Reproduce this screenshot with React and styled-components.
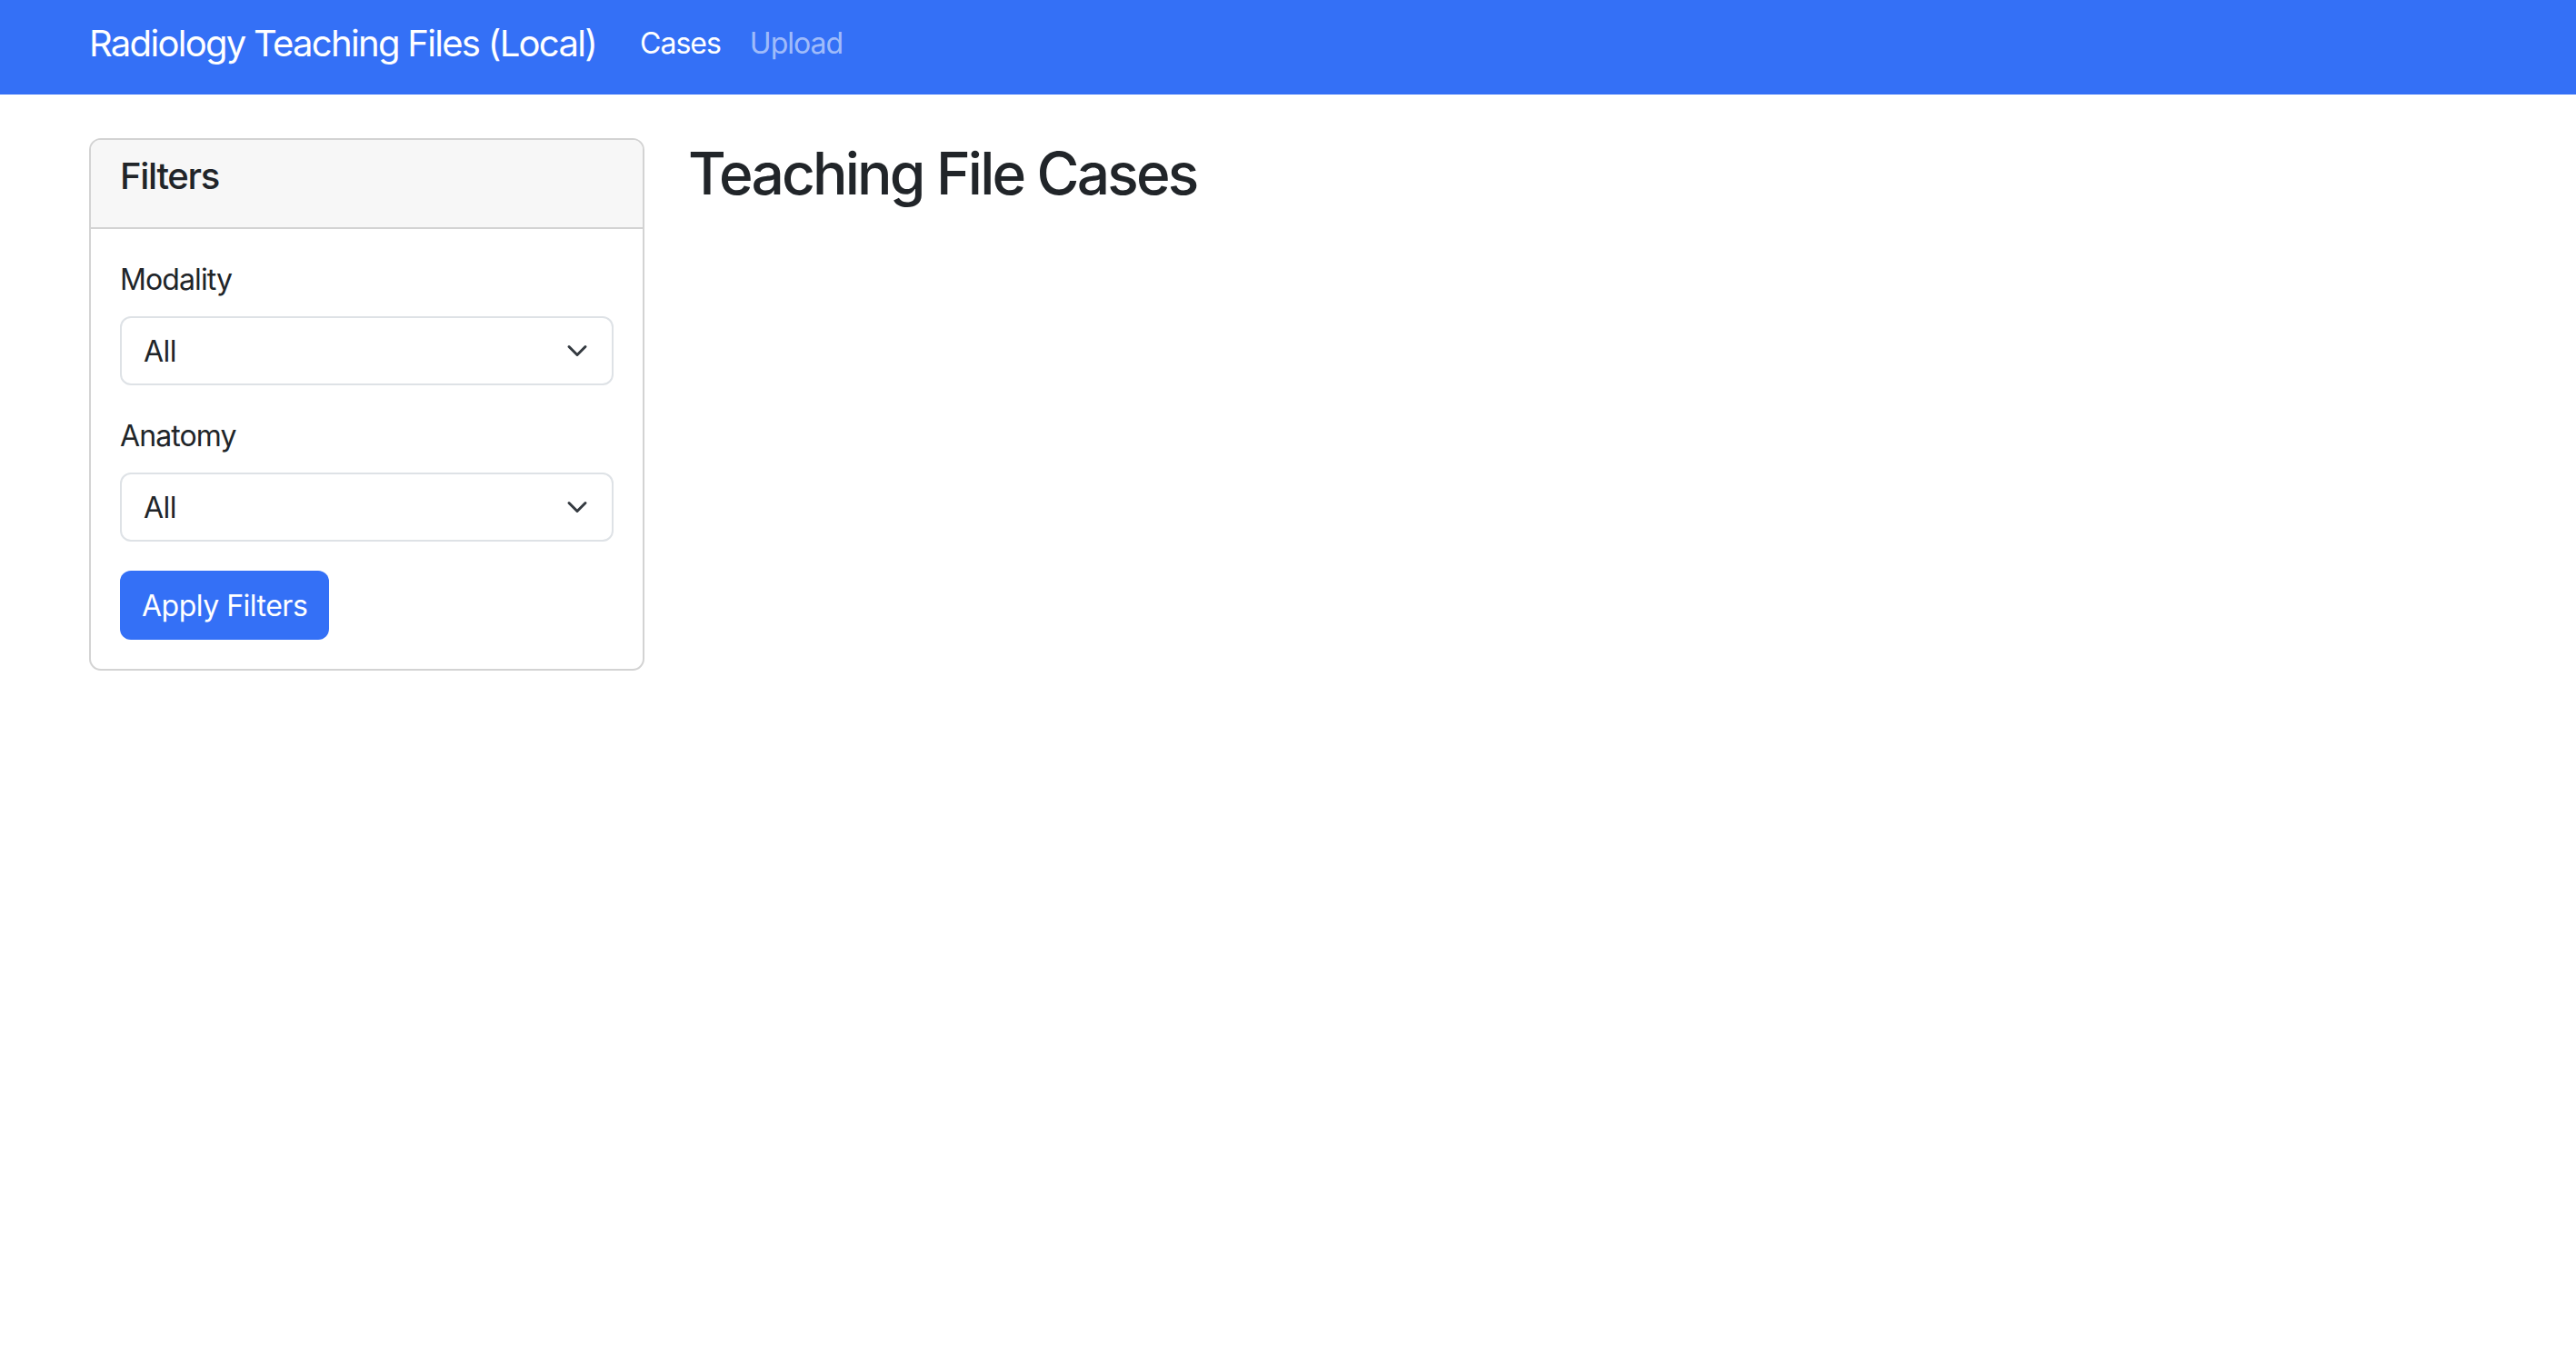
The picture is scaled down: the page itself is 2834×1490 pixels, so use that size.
import React from 'react';
import styled, { createGlobalStyle } from 'styled-components';

const GlobalStyle = createGlobalStyle`
  * { box-sizing: border-box; }
  body {
    margin: 0;
    background: #ffffff;
    color: #212529;
    font-family: Inter, "Noto Sans", "Liberation Sans", sans-serif;
  }
`;

const Navbar = styled.nav`
  display: flex;
  align-items: center;
  height: 104px;
  padding: 0 98px 8px;
  background: #3470f6;
`;

const Brand = styled.a`
  font-size: 40px;
  line-height: 60px;
  color: #ffffff;
  text-decoration: none;
  margin-right: 32px;
  letter-spacing: -1.7px;
`;

const NavLinks = styled.div`
  display: flex;
  align-items: center;
`;

const NavLink = styled.a`
  font-size: 32px;
  line-height: 48px;
  padding: 0 16px;
  letter-spacing: -1px;
  text-decoration: none;
  color: ${(props) => (props.$active ? '#ffffff' : 'rgba(255, 255, 255, 0.55)')};
`;

const Main = styled.main`
  display: flex;
  align-items: flex-start;
  gap: 48px;
  padding: 48px 98px;
`;

const Card = styled.section`
  width: 611px;
  flex-shrink: 0;
  border: 2px solid #d3d3d3;
  border-radius: 13px;
  overflow: hidden;
`;

const CardHeader = styled.div`
  padding: 16px 32px;
  background: #f7f7f7;
  border-bottom: 2px solid #d3d3d3;
`;

const CardTitle = styled.h5`
  margin: 0 0 16px;
  font-size: 40px;
  line-height: 48px;
  font-weight: 500;
  letter-spacing: -1.3px;
  color: #212529;
`;

const CardBody = styled.div`
  padding: 32px;
`;

const Field = styled.div`
  margin-bottom: 32px;
`;

const Label = styled.label`
  display: block;
  font-size: 32px;
  line-height: 48px;
  margin-bottom: 16px;
  letter-spacing: -0.9px;
  color: #212529;
`;

const SelectWrap = styled.div`
  position: relative;
`;

const Select = styled.select`
  display: block;
  width: 100%;
  height: 76px;
  padding: 0 72px 0 24px;
  font-family: inherit;
  font-size: 32px;
  letter-spacing: -0.5px;
  color: #212529;
  background: #ffffff;
  border: 2px solid #dee2e6;
  border-radius: 12px;
  appearance: none;
  -webkit-appearance: none;
  outline: none;
`;

const Chevron = styled.svg`
  position: absolute;
  right: 28px;
  top: 50%;
  width: 24px;
  height: 24px;
  margin-top: -12px;
  pointer-events: none;
`;

const Button = styled.button`
  height: 76px;
  padding: 0 24px;
  font-family: inherit;
  font-size: 32px;
  letter-spacing: -0.5px;
  color: #ffffff;
  background: #3470f6;
  border: none;
  border-radius: 12px;
  cursor: pointer;
`;

const Content = styled.div`
  flex: 1;
`;

const Title = styled.h2`
  margin: 0 0 16px;
  font-size: 64px;
  line-height: 77px;
  font-weight: 500;
  color: #212529;
  letter-spacing: -2.8px;
`;

const FilterSelect = ({ label }) => (
  <Field>
    <Label>{label}</Label>
    <SelectWrap>
      <Select defaultValue="all">
        <option value="all">All</option>
      </Select>
      <Chevron viewBox="0 0 16 16" fill="none">
        <path d="M2 5l6 6 6-6" stroke="#343a40" strokeWidth="2" strokeLinecap="round" strokeLinejoin="round" />
      </Chevron>
    </SelectWrap>
  </Field>
);

const App = () => {
  return (
    <>
      <GlobalStyle />
      <Navbar>
        <Brand href="#">Radiology Teaching Files (Local)</Brand>
        <NavLinks>
          <NavLink href="#" $active>Cases</NavLink>
          <NavLink href="#">Upload</NavLink>
        </NavLinks>
      </Navbar>
      <Main>
        <Card>
          <CardHeader>
            <CardTitle>Filters</CardTitle>
          </CardHeader>
          <CardBody>
            <FilterSelect label="Modality" />
            <FilterSelect label="Anatomy" />
            <Button>Apply Filters</Button>
          </CardBody>
        </Card>
        <Content>
          <Title>Teaching File Cases</Title>
        </Content>
      </Main>
    </>
  );
};

export default App;
